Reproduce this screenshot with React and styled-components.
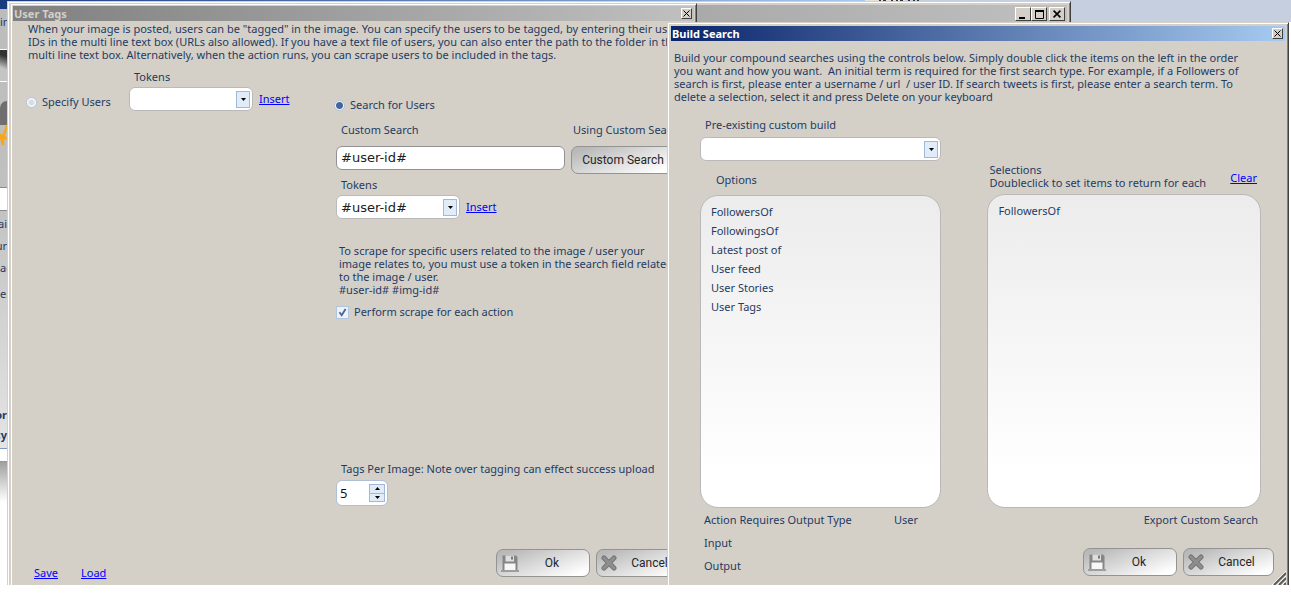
import React from 'react';
import styled, { createGlobalStyle } from 'styled-components';

const GlobalStyle = createGlobalStyle`
  :root {
    --clr-face: #d4d0c8;
    --clr-text: #1f3b63;
    --clr-link: #0000ff;
    --clr-edge: #404040;
    --font-ui: 'Noto Sans', 'Open Sans', sans-serif;
    --font-button: Roboto, 'Liberation Sans', sans-serif;
    --font-field: 'DejaVu Sans', Verdana, sans-serif;
  }

  *,
  *::before,
  *::after {
    box-sizing: border-box;
  }

  body {
    margin: 0;
    background: #fff;
    color: var(--clr-text);
    font-family: var(--font-ui);
    font-size: 11px;
    line-height: 14px;
  }
`;

// DESKTOP
const Desktop = styled.main`
  position: relative;
  height: calc(100vh - 8px);
  min-height: 560px;
  overflow: hidden;
  background: linear-gradient(#c6cfdf, #c6cfdf) top / 100% 22px no-repeat #fff;
`;

const AppBar = styled.div`
  display: flex;
  align-items: flex-start;
  height: 9px;

  &::before {
    content: '';
    width: 67%;
    height: 9px;
    background: linear-gradient(90deg, #1a3a80, #a6caf0);
  }

  svg {
    display: block;
  }
`;

const AppStrip = styled.aside`
  display: flex;
  flex-direction: column;
  width: 7px;
  height: 100%;
  overflow: hidden;
  background: linear-gradient(#bcbcbc, #c0c0c0 180px, #e4e4e4 440px);
`;

const StripText = styled.span`
  display: flex;
  flex: none;
  justify-content: ${({ $start }) => ($start ? 'flex-start' : 'flex-end')};
  height: ${({ $bold }) => ($bold ? '20px' : '22px')};
  font-weight: ${({ $bold }) => ($bold ? 700 : 400)};
  white-space: nowrap;
`;

const StripBlock = styled.div`
  flex: none;
  height: ${({ $height }) => $height};
  background: ${({ $fill }) => $fill || 'transparent'};
  border-style: solid;
  border-color: ${({ $line }) => $line || 'transparent'};
  border-width: ${({ $line }) => ($line ? '1px 0' : '0')};

  svg {
    display: block;
  }
`;

// WINDOWS
const Window = styled.section`
  position: absolute;
  top: ${({ $top }) => $top};
  bottom: 0;
  left: ${({ $left }) => $left};
  right: ${({ $right }) => $right};
  display: flex;
  flex-direction: column;
  padding: ${({ $inset }) => $inset};
  padding-bottom: 0;
  background: var(--clr-face);
  border: 1px solid var(--clr-face);
  border-right-color: var(--clr-edge);
  border-bottom: 0;
  box-shadow: inset 1px 1px 0 #fff, inset -1px 0 0 #808080;
`;

const TitleBar = styled.header`
  display: flex;
  flex: none;
  align-items: center;
  justify-content: space-between;
  height: ${({ $tall }) => ($tall ? '18px' : '15px')};
  padding: 0 2px 0 1px;
  background: ${({ $active }) =>
    $active
      ? 'linear-gradient(90deg, #0a246a, #a6caf0)'
      : 'linear-gradient(90deg, #808080, #c0c0c0)'};

  h1 {
    margin: 0;
    color: ${({ $active }) => ($active ? '#fff' : 'var(--clr-face)')};
    font-size: 11px;
    font-weight: 700;
    line-height: 15px;
  }
`;

const Caption = styled.button`
  display: grid;
  place-items: center;
  width: ${({ $large }) => ($large ? '16px' : '11px')};
  height: ${({ $large }) => ($large ? '14px' : '11px')};
  padding: 0;
  background: var(--clr-face);
  border: 1px solid;
  border-color: #fff var(--clr-edge) var(--clr-edge) #fff;
`;

const CaptionGroup = styled.div`
  display: flex;
  margin-left: auto;

  button:last-child {
    margin-left: 2px;
  }
`;

// SHARED CONTROLS
const Intro = styled.p`
  margin: 0;
  padding: ${({ $pad }) => $pad};
  line-height: 13px;
  white-space: pre;
`;

const Label = styled.label`
  display: block;
  padding-left: ${({ $indent }) => $indent || '5px'};
  line-height: 14px;
  white-space: nowrap;
`;

const Link = styled.a`
  color: var(--clr-link);
  line-height: 14px;
  text-decoration: underline;
`;

const Row = styled.div`
  display: flex;
  align-items: center;
  gap: 6px;
`;

const SelectBox = styled.div`
  display: flex;
  align-items: center;
  width: ${({ $width }) => $width};
  height: 24px;
  padding-right: 2px;
  background: #fff;
  border: 1px solid #bababa;
  border-radius: 6px;

  select {
    flex: 1;
    min-width: 0;
    height: 22px;
    padding: 0 4px;
    appearance: none;
    background: transparent;
    border: 0;
    outline: 0;
    color: #202020;
    font-family: var(--font-field);
    font-size: 13px;
  }
`;

const ArrowBox = styled.span`
  display: grid;
  flex: none;
  place-items: center;
  width: 14px;
  height: 17px;
  background: #e1ecf9;
  border: 1px solid #a3b8d6;
  pointer-events: none;
`;

const TextInput = styled.input`
  width: 100%;
  height: 24px;
  padding: 0 4px 2px;
  background: #fff;
  border: 1px solid #919196;
  border-radius: 6px;
  outline: 0;
  color: #202020;
  font-family: var(--font-field);
  font-size: 13px;
`;

const Choice = styled.label`
  display: flex;
  align-items: center;
  gap: 5px;
  height: 14px;
  white-space: nowrap;

  input {
    flex: none;
    width: 11px;
    height: 11px;
    margin: 0;
    appearance: none;
    background: #f1f3f6;
    border: 1px solid #b3c4de;
  }

  input[type='radio'] {
    border-radius: 50%;
    background: radial-gradient(circle, #d9dce1 0 2px, #fafafa 4px);
  }

  input[type='radio']:checked {
    background: radial-gradient(circle, #44659a 0 3px, #f1f3f6 4px);
  }

  input[type='checkbox'] {
    width: 13px;
    height: 13px;
  }

  input[type='checkbox']:checked {
    background: url("data:image/svg+xml,%3Csvg xmlns='http://www.w3.org/2000/svg' viewBox='0 0 11 11'%3E%3Cpath d='M2.5 5.2 4.7 8.2 8.6 2' fill='none' stroke='%2344659a' stroke-width='1.8'/%3E%3C/svg%3E")
      #eef1f5;
  }
`;

const Button = styled.button`
  display: flex;
  align-items: center;
  width: ${({ $width }) => $width};
  height: 28px;
  padding: 0 4px;
  background: linear-gradient(160deg, #b9b9b9 10%, #dcdcdc 50%, #fff 90%);
  border: 1px solid #939393;
  border-radius: 7px;
  color: #262626;
  font-family: var(--font-button);
  font-size: 12px;

  svg {
    flex: none;
  }

  span {
    flex: 1;
    text-align: center;
  }
`;

const ButtonBar = styled.div`
  display: flex;
  gap: 6px;
`;

// USER TAGS
const TagsBody = styled.div`
  display: flex;
  flex: 1;
  flex-direction: column;
  padding: 1px 0 0 15px;
`;

const TagsColumns = styled.div`
  display: grid;
  grid-template-columns: 306px 1fr;
  padding-top: 9px;
`;

const SpecifyUsers = styled.div`
  display: grid;
  grid-template-columns: 103px auto;
  align-content: start;
  margin-left: -2px;

  > label {
    margin-top: 25px;
  }
`;

const Stack = styled.div`
  display: flex;
  flex-direction: column;
  gap: ${({ $gap }) => $gap || '3px'};
`;

const SearchUsers = styled.div`
  padding-top: 28px;
`;

const SearchFields = styled.div`
  display: flex;
  flex-direction: column;
  padding: 11px 0 0 2px;
`;

const SearchGrid = styled.div`
  display: grid;
  grid-template-columns: 229px auto;
  gap: 9px 6px;
  align-items: start;
  padding-bottom: 4px;
`;

const TagsCount = styled.div`
  display: flex;
  flex-direction: column;
  gap: 4px;
  padding-top: 143px;
`;

const Spinner = styled.div`
  display: flex;
  align-items: center;
  justify-content: space-between;
  width: 52px;
  height: 26px;
  padding: 0 2px 0 3px;
  background: #fff;
  border: 1px solid #afbfd8;
  border-radius: 6px;

  input {
    width: 26px;
    padding: 0;
    appearance: textfield;
    background: transparent;
    border: 0;
    outline: 0;
    color: #101010;
    font-family: var(--font-ui);
    font-size: 13px;
  }

  input::-webkit-inner-spin-button {
    appearance: none;
  }
`;

const Steps = styled.div`
  display: grid;
  width: 16px;
  height: 18px;
  border: 1px solid #a3b8d6;

  button {
    display: grid;
    place-items: center;
    padding: 0;
    background: #e1ecf9;
    border: 0;
  }

  button + button {
    border-top: 1px solid #a3b8d6;
  }
`;

const TagsFooter = styled.footer`
  display: flex;
  align-items: flex-end;
  gap: 23px;
  margin-top: auto;
  padding: 0 7px 8px 6px;

  ${ButtonBar} {
    margin-left: auto;
  }

  > a {
    margin-bottom: -3px;
  }
`;

// BUILD SEARCH
const BuildBody = styled.div`
  display: flex;
  flex: 1;
  flex-direction: column;
  min-height: 0;
`;

const BuildGrid = styled.div`
  display: grid;
  flex: 1;
  grid-template-columns: 240fr 272fr;
  gap: 46px;
  min-height: 0;
  padding: 15px 24px 0 29px;
`;

const BuildColumn = styled.div`
  display: flex;
  flex-direction: column;
  min-height: 0;
`;

const OptionsLabel = styled.h2`
  margin: 0;
  padding: 12px 0 8px 16px;
  font-size: 11px;
  font-weight: 400;
`;

const SelectionsHead = styled.div`
  display: flex;
  align-items: center;
  justify-content: space-between;
  padding: 45px 4px 5px 2px;
  line-height: 13px;

  a {
    padding-top: 4px;
  }
`;

const ItemList = styled.ul`
  flex: 1;
  min-height: 0;
  margin: 0;
  padding: 6px 10px;
  list-style: none;
  background: linear-gradient(#ececec, #fff 90%);
  border: 1px solid #b9b9b9;
  border-radius: 18px;

  li {
    line-height: 19px;
  }
`;

const BuildFooter = styled.footer`
  display: flex;
  justify-content: space-between;
  padding: 5px 11px 9px 33px;
`;

const Facts = styled.dl`
  display: grid;
  grid-template-columns: 190px auto;
  row-gap: 9px;
  margin: 0;
  padding-bottom: 3px;

  dd {
    margin: 0;
  }
`;

const Export = styled.div`
  display: flex;
  flex-direction: column;
  justify-content: space-between;

  > span {
    padding-right: 16px;
    text-align: right;
  }
`;

const Grip = styled.svg`
  position: absolute;
  right: 2px;
  bottom: 0;
`;

// ICONS
const CrossIcon = ({ size = 7, stroke = 1 }) => (
  <svg width={size} height={size} viewBox='0 0 7 7'>
    <path d='M0.5 0.5 6.5 6.5M6.5 0.5 0.5 6.5' stroke='#000' strokeWidth={stroke} />
  </svg>
);

const Triangle = ({ up }) => (
  <svg width='5' height='3' viewBox='0 0 5 3'>
    <path d={up ? 'M0 3h5L2.5 0z' : 'M0 0h5L2.5 3z'} fill='#000' />
  </svg>
);

const SaveIcon = () => (
  <svg width='18' height='18' viewBox='0 0 18 18'>
    <path d='M0 17h18' stroke='#8b8b8b' strokeWidth='1.5' />
    <path d='M1.5 1.5h13.5l1.5 1.5v13h-15z' fill='#868686' />
    <path d='M4.5 1.5h8.5v6h-8.5z' fill='#dedede' />
    <path d='M10 2.5h2v3h-2z' fill='#777' />
    <path d='M3.5 9.5h11v6.5h-11z' fill='#f7f7f7' />
  </svg>
);

const CancelIcon = () => (
  <svg width='16' height='18' viewBox='0 0 16 18'>
    <path d='M3 4 13 14M13 4 3 14' stroke='#757575' strokeWidth='5' strokeLinecap='round' />
    <path d='M3 4 13 14M13 4 3 14' stroke='#8e8e8e' strokeWidth='3' strokeLinecap='round' />
  </svg>
);

// UI DATA
const options = [
  'FollowersOf',
  'FollowingsOf',
  'Latest post of',
  'User feed',
  'User Stories',
  'User Tags',
];

const selections = ['FollowersOf'];

const tagsIntro = `When your image is posted, users can be "tagged" in the image. You can specify the users to be tagged, by entering their user
IDs in the multi line text box (URLs also allowed). If you have a text file of users, you can also enter the path to the folder in the
multi line text box. Alternatively, when the action runs, you can scrape users to be included in the tags.`;

const scrapeNote = `To scrape for specific users related to the image / user your
image relates to, you must use a token in the search field related
to the image / user.
#user-id# #img-id#`;

const buildIntro = `Build your compound searches using the controls below. Simply double click the items on the left in the order
you want and how you want.  An initial term is required for the first search type. For example, if a Followers of
search is first, please enter a username / url  / user ID. If search tweets is first, please enter a search term. To
delete a selection, select it and press Delete on your keyboard`;

function Dropdown({ id, width, value }) {
  return (
    <SelectBox $width={width}>
      <select id={id} defaultValue={value}>
        <option value={value}>{value}</option>
      </select>
      <ArrowBox>
        <Triangle />
      </ArrowBox>
    </SelectBox>
  );
}

function Confirm() {
  return (
    <ButtonBar>
      <Button type='button' $width='94px'>
        <SaveIcon />
        <span>Ok</span>
      </Button>
      <Button type='button' $width='91px'>
        <CancelIcon />
        <span>Cancel</span>
      </Button>
    </ButtonBar>
  );
}

function Strip() {
  return (
    <AppStrip>
      <StripBlock $height='6px' />
      <StripText $start>in</StripText>
      <StripBlock $height='12px' />
      <StripBlock $height='33px' $fill='linear-gradient(200deg, #333 20%, #c4c4c4 60%)' $line='#fff' />
      <StripBlock $height='19px' />
      <StripBlock $height='86px'>
        <svg width='7' height='46' viewBox='0 0 7 46'>
          <path d='M7 0C3 0 0 3 0 8v16h7z' fill='#6f6f6f' />
          <path d='M0 33 3 44 3 35 7 38M4 34 7 24' fill='none' stroke='#f5a81c' strokeWidth='2.5' />
        </svg>
      </StripBlock>
      <StripBlock $height='24px' $fill='#fff' $line='#8b8b8b' />
      <StripBlock $height='6px' />
      <StripText>ai</StripText>
      <StripText>ur</StripText>
      <StripText $start>ac</StripText>
      <StripBlock $height='4px' />
      <StripText $start>er</StripText>
      <StripBlock $height='99px' />
      <StripText $bold>or</StripText>
      <StripText $bold>cy</StripText>
      <StripBlock $height='14px' $fill='#fff' $line='#7f9bc4' />
      <StripBlock $height='40px' $fill='linear-gradient(#a0a0a0, #fff)' />
      <StripBlock $height='100%' $fill='#fff' />
    </AppStrip>
  );
}

function UserTags() {
  return (
    <Window $top='3px' $left='10px' $right='594px' $inset='2px'>
      <TitleBar>
        <h1>User Tags</h1>
        <Caption type='button' aria-label='Close'>
          <CrossIcon />
        </Caption>
      </TitleBar>

      <TagsBody>
        <Intro>{tagsIntro}</Intro>

        <TagsColumns>
          <SpecifyUsers>
            <Choice>
              <input type='radio' name='source' />
              Specify Users
            </Choice>
            <Stack>
              <Label htmlFor='specify-tokens'>Tokens</Label>
              <Row>
                <Dropdown id='specify-tokens' width='124px' value='' />
                <Link href='#insert'>Insert</Link>
              </Row>
            </Stack>
          </SpecifyUsers>

          <SearchUsers>
            <Choice>
              <input type='radio' name='source' defaultChecked />
              Search for Users
            </Choice>

            <SearchFields>
              <SearchGrid>
                <Label htmlFor='custom-search'>Custom Search</Label>
                <Label as='span' $indent='2px'>
                  Using Custom Search
                </Label>
                <TextInput id='custom-search' type='text' defaultValue='#user-id#' />
                <Button type='button' $width='104px'>
                  <span>Custom Search</span>
                </Button>
              </SearchGrid>

              <Stack>
                <Label htmlFor='search-tokens'>Tokens</Label>
                <Row>
                  <Dropdown id='search-tokens' width='124px' value='#user-id#' />
                  <Link href='#insert'>Insert</Link>
                </Row>
              </Stack>

              <Intro $pad='25px 0 9px 3px'>{scrapeNote}</Intro>

              <Choice>
                <input type='checkbox' defaultChecked />
                Perform scrape for each action
              </Choice>

              <TagsCount>
                <Label htmlFor='tags-count'>
                  Tags Per Image: Note over tagging can effect success upload
                </Label>
                <Spinner>
                  <input id='tags-count' type='number' defaultValue='5' />
                  <Steps>
                    <button type='button' aria-label='More'>
                      <Triangle up />
                    </button>
                    <button type='button' aria-label='Less'>
                      <Triangle />
                    </button>
                  </Steps>
                </Spinner>
              </TagsCount>
            </SearchFields>
          </SearchUsers>
        </TagsColumns>

        <TagsFooter>
          <Link href='#save'>Save</Link>
          <Link href='#load'>Load</Link>
          <Confirm />
        </TagsFooter>
      </TagsBody>
    </Window>
  );
}

function BuildSearch() {
  return (
    <Window $top='22px' $left='667px' $right='2px' $inset='3px'>
      <TitleBar $active>
        <h1>Build Search</h1>
        <Caption type='button' aria-label='Close'>
          <CrossIcon />
        </Caption>
      </TitleBar>

      <BuildBody>
        <Intro $pad='10px 0 0 3px'>{buildIntro}</Intro>

        <BuildGrid>
          <BuildColumn>
            <Stack $gap='5px'>
              <Label htmlFor='prebuilt'>Pre-existing custom build</Label>
              <Dropdown id='prebuilt' width='100%' value='' />
            </Stack>
            <OptionsLabel>Options</OptionsLabel>
            <ItemList>
              {options.map((option) => (
                <li key={option}>{option}</li>
              ))}
            </ItemList>
          </BuildColumn>

          <BuildColumn>
            <SelectionsHead>
              <div>
                Selections
                <br />
                Doubleclick to set items to return for each
              </div>
              <Link href='#clear'>Clear</Link>
            </SelectionsHead>
            <ItemList>
              {selections.map((selection) => (
                <li key={selection}>{selection}</li>
              ))}
            </ItemList>
          </BuildColumn>
        </BuildGrid>

        <BuildFooter>
          <Facts>
            <dt>Action Requires Output Type</dt>
            <dd>User</dd>
            <dt>Input</dt>
            <dd />
            <dt>Output</dt>
            <dd />
          </Facts>
          <Export>
            <span>Export Custom Search</span>
            <Confirm />
          </Export>
        </BuildFooter>
      </BuildBody>

      <Grip width='14' height='14' viewBox='0 0 14 14'>
        <path d='M0 14 14 0M5 14l9-9M10 14l4-4' stroke='#fff' strokeWidth='1' />
        <path d='M2 14 14 2M7 14l7-7M12 14l2-2' stroke='#5c5c5c' strokeWidth='2' />
      </Grip>
    </Window>
  );
}

function App() {
  return (
    <>
      <GlobalStyle />
      <Desktop>
        <AppBar>
          <svg width='60' height='1' viewBox='0 0 60 1'>
            <path d='M0 0.5h40' stroke='#e6e3dc' />
            <path d='M14 0.5h40' stroke='#333' strokeDasharray='2 2 3 5 2 3' />
          </svg>
        </AppBar>
        <Strip />

        <Window $top='1px' $left='7px' $right='220px' $inset='3px'>
          <TitleBar $tall>
            <CaptionGroup>
              <Caption $large type='button' aria-label='Minimize'>
                <svg width='10' height='9' viewBox='0 0 10 9'>
                  <path d='M1 8h6' stroke='#000' strokeWidth='2' />
                </svg>
              </Caption>
              <Caption $large type='button' aria-label='Maximize'>
                <svg width='9' height='9' viewBox='0 0 9 9'>
                  <path d='M0 1h9' stroke='#000' strokeWidth='2' />
                  <path d='M0.5 1v7.5h8V1' fill='none' stroke='#000' />
                </svg>
              </Caption>
              <Caption $large type='button' aria-label='Close window'>
                <CrossIcon size={8} stroke={1.4} />
              </Caption>
            </CaptionGroup>
          </TitleBar>
        </Window>

        <UserTags />
        <BuildSearch />
      </Desktop>
    </>
  );
}

export default App;
